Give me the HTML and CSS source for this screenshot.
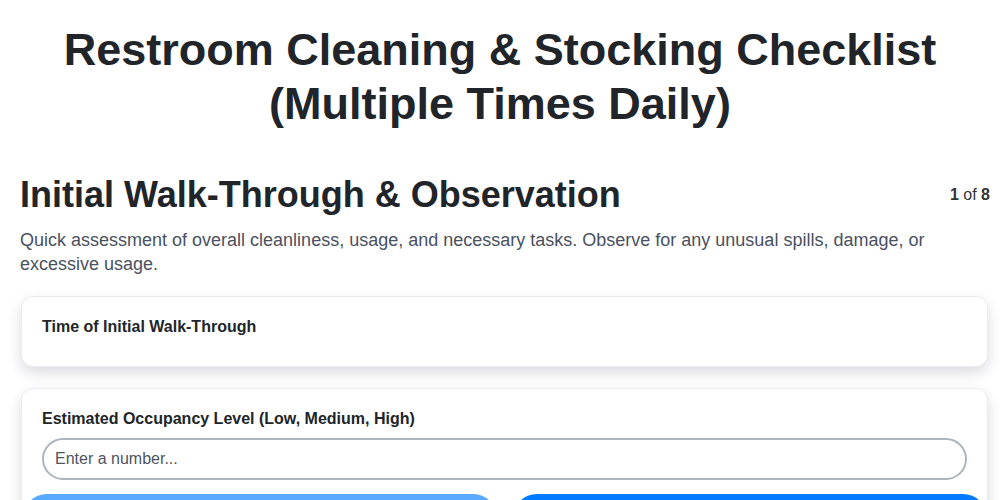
FILE: index.html
```html
<!DOCTYPE html>
<html lang="en">
<head>
    <meta charset="UTF-8">
    <meta name="viewport" content="width=device-width, initial-scale=1.0">
    <title>Restroom Cleaning &amp; Stocking Checklist</title>
    <link rel="stylesheet" href="styles.css">
</head>
<body>

<h1 class="page-title">Restroom Cleaning &amp; Stocking Checklist (Multiple Times Daily)</h1>

<div class="wizard">
    <div class="step-head">
        <h2 class="step-title">Initial Walk-Through &amp; Observation</h2>
        <div class="step-count"><b>1</b> of <b>8</b></div>
    </div>
    <p class="step-desc">Quick assessment of overall cleanliness, usage, and necessary tasks. Observe for any unusual spills, damage, or excessive usage.</p>

    <div class="question">
        <label class="question-label">Time of Initial Walk-Through</label>
    </div>

    <div class="question">
        <label class="question-label" for="occupancy">Estimated Occupancy Level (Low, Medium, High)</label>
        <input type="text" id="occupancy" class="text-input" placeholder="Enter a number...">
        <div class="nav-buttons">
            <button class="nav-button" disabled>Previous</button>
            <button class="nav-button">Next</button>
        </div>
    </div>
</div>

</body>
</html>
```

FILE: styles.css
```css
body {
    font-family: "Liberation Sans", Arial, sans-serif;
    margin: 0;
    color: #212529;
    background: #fff;
}
.page-title {
    font-size: 45px;
    line-height: 1.2;
    text-align: center;
    margin: 23px 40px 0;
}
.wizard {
    padding: 0 10px 20px 20px;
}
.step-head {
    display: flex;
    justify-content: space-between;
    align-items: center;
    margin-top: 42px;
}
.step-title {
    font-size: 36px;
    line-height: 1.2;
    margin: 0;
}
.step-count {
    font-size: 16px;
    color: #333;
}
.step-desc {
    font-size: 18px;
    line-height: 1.35;
    color: #4a5160;
    margin: 12px 0 19px;
}
.question {
    background: #fff;
    border: 1px solid #ebebf2;
    border-radius: 12px;
    box-shadow: 0 6px 14px rgba(40, 40, 70, 0.16);
    padding: 20px 20px 20px;
    margin: 0 2px 21px 1px;
}
.question-label {
    display: block;
    font-size: 16px;
    font-weight: bold;
    line-height: 20px;
    margin-bottom: 9px;
}
.text-input {
    display: block;
    box-sizing: border-box;
    width: 100%;
    height: 42px;
    padding: 0 11px;
    border: 2px solid #adb4bc;
    border-radius: 21px;
    font-family: inherit;
    font-size: 16px;
    color: #333;
}
.text-input::placeholder {
    color: #4e5460;
}
.nav-buttons {
    display: flex;
    gap: 16px;
    margin: 14px -20px 0 -19px;
}
.nav-button {
    flex: 1;
    height: 48px;
    border: none;
    border-radius: 24px;
    background: #007bff;
    color: #fff;
    font-family: inherit;
    font-size: 16px;
    font-weight: bold;
}
.nav-button:disabled {
    opacity: 0.65;
}
```
